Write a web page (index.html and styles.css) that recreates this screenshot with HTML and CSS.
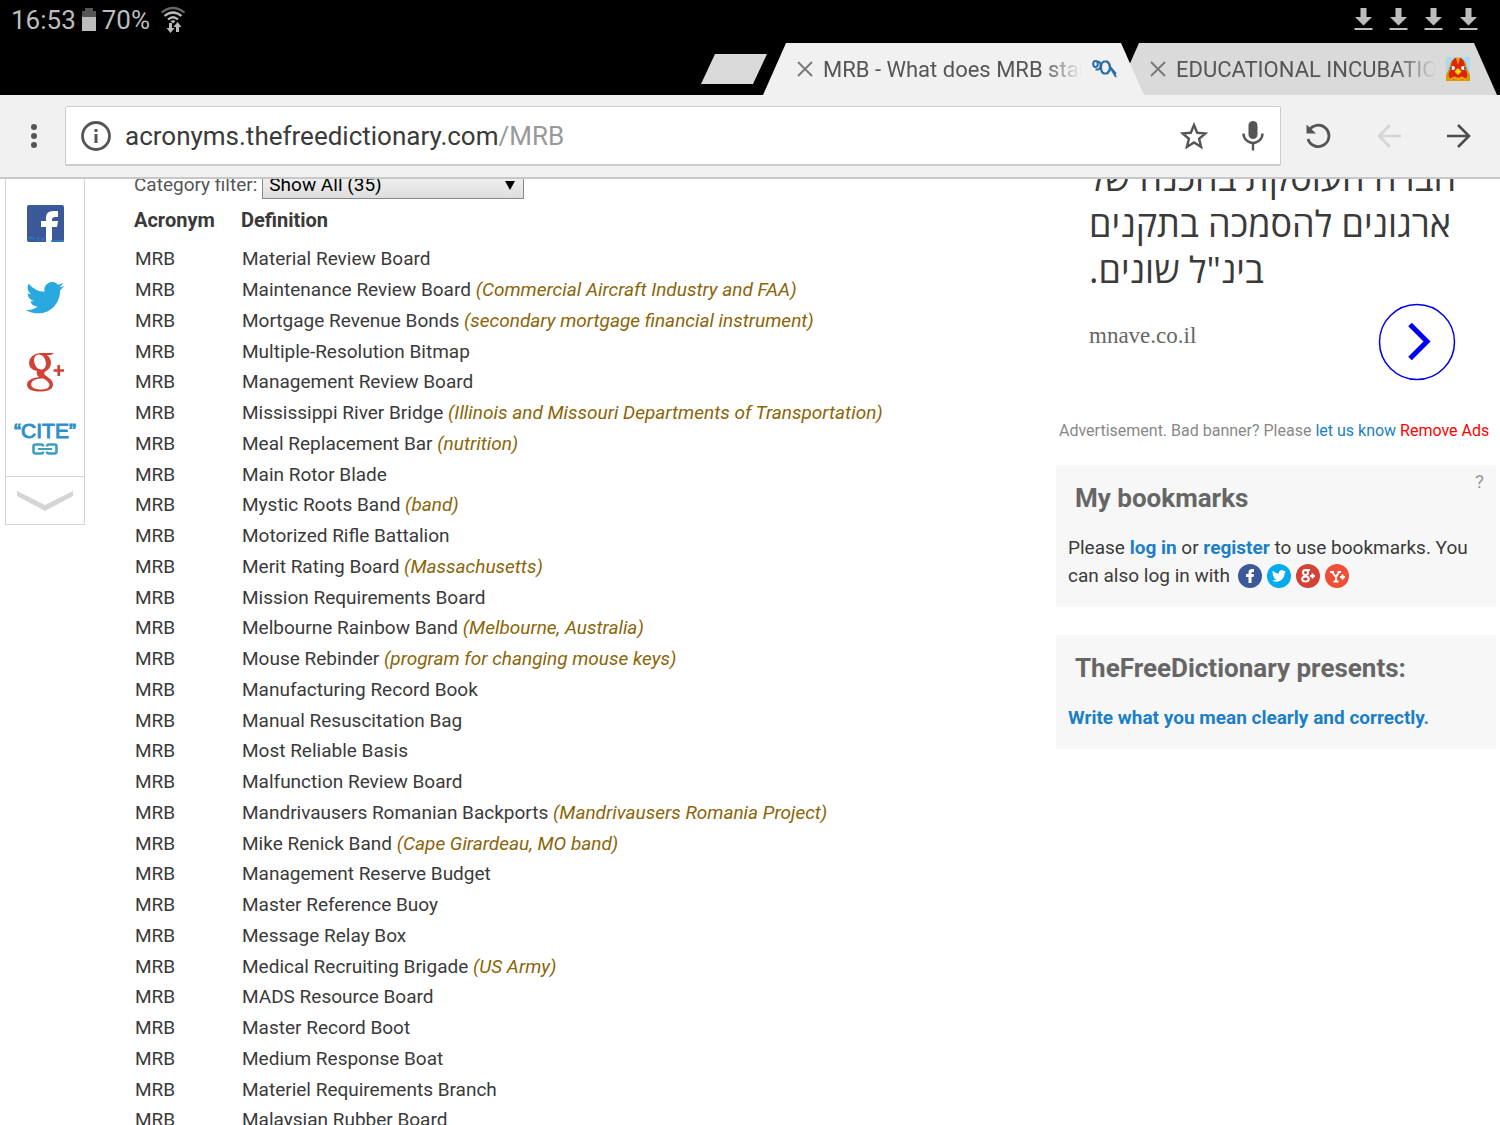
FILE: index.html
```html
<!DOCTYPE html>
<html lang="en">

<head>
    <meta charset="UTF-8">
    <meta name="viewport" content="width=device-width, initial-scale=1.0">
    <title>MRB - What does MRB stand for?</title>
    <link rel="stylesheet" href="styles.css">
</head>

<body>
    <!-- shapes used more than once -->
    <svg class="defs" aria-hidden="true">
        <symbol id="download" viewBox="0 0 20 24">
            <path d="M6.500 0h6v9H18L9.500 17.500 1 9h5.500z M.5 20h18v2H.5z" fill="#bdbdbd" />
        </symbol>
        <symbol id="close" viewBox="0 0 16 16">
            <path d="M1 1l14 14M15 1L1 15" stroke="#777" stroke-width="1.800" fill="none" />
        </symbol>
        <symbol id="bird" viewBox="0 0 24 20">
            <path d="M24 2.400a10 10 0 0 1-2.800.8A5 5 0 0 0 23.300.4a10 10 0 0 1-3.100 1.200 4.900 4.900 0 0 0-8.400 4.500A14 14 0 0 1 1.700 1a4.900 4.900 0 0 0 1.500 6.600A5 5 0 0 1 1 7v.1a4.900 4.900 0 0 0 4 4.800 5 5 0 0 1-2.200.1 4.900 4.900 0 0 0 4.600 3.400A10 10 0 0 1 0 17.500a14 14 0 0 0 7.500 2.200c9.100 0 14-7.500 14-14v-.6A10 10 0 0 0 24 2.400z" />
        </symbol>
    </svg>

    <div class="status-bar">
        <div class="status-left">
            <span>16:53</span>
            <svg width="16" height="24" viewBox="0 0 16 24">
                <path d="M4 0h8v3h3v6H1V3h3z" fill="#555" />
                <path d="M1 9h14v14H1z" fill="#bdbdbd" />
            </svg>
            <span>70%</span>
            <svg class="wifi" width="26" height="28" viewBox="0 0 26 28" fill="none" stroke="#bdbdbd" stroke-width="2.200">
                <path d="M1.500 6.500q11.500-9 23 0" stroke="#666" />
                <path d="M4.500 10q8.500-7 17 0M8 13.500q5-4.500 10 0" />
                <path d="M10.500 15q2.500-1.500 5 0L13 17.500z" fill="#bdbdbd" stroke="none" />
                <path d="M9 17h3v5h2.500L10.500 27l-4-5H9zM16 26h3v-5h2.500l-4-5-4 5H16z" fill="#bdbdbd" stroke="none" />
            </svg>
        </div>
        <div class="status-right">
            <svg width="20" height="24"><use href="#download" /></svg>
            <svg width="20" height="24"><use href="#download" /></svg>
            <svg width="20" height="24"><use href="#download" /></svg>
            <svg width="20" height="24"><use href="#download" /></svg>
        </div>
    </div>

    <div class="tab-strip">
        <button class="new-tab" aria-label="New tab"></button>
        <div class="tab active">
            <button class="tab-close" aria-label="Close tab"><svg width="16" height="16"><use href="#close" /></svg></button>
            <span class="tab-title">MRB - What does MRB stand for?</span>
            <svg width="25" height="18" viewBox="0 0 25 18" fill="none" stroke="#2a6da3" stroke-width="2">
                <ellipse cx="3.500" cy="4" rx="2.300" ry="3" />
                <path d="M5.500 1.500Q9 2 8.500 6q0 4-5 3.500" />
                <path d="M12 1.500q-3 1-3 6t3 6h3q3-2 3-6t-3-6z" stroke-width="2.200" />
                <path d="M17 5l7 12M18 7l6 7" />
            </svg>
        </div>
        <div class="tab">
            <button class="tab-close" aria-label="Close tab"><svg width="16" height="16"><use href="#close" /></svg></button>
            <span class="tab-title">EDUCATIONAL INCUBATION</span>
            <svg width="24" height="24" viewBox="0 0 24 24">
                <path d="M0 0h24v24H0z" fill="#a9d9f5" />
                <path d="M0 24v-6q3-5 4-11 2-6 8-6.500Q18 1 20 7q1 6 4 11v6z" fill="#d99a00" />
                <path d="M3 20q-1-4 2-9 0-7 4-10h6q4 3 4 10 3 5 2 9l-4 3-5-3-5 3z" fill="#dd2410" />
                <path d="M10 1l2 7 2-7z" fill="#f0a400" />
                <path d="M12 11l3.500 3.500L12 18l-3.500-3.500z" fill="#ffd800" />
                <path d="M4 24q0-4 5-4.500l3 2 3-2q5 .5 5 4.500l-4-2-4 1-4-1z" fill="#f0a400" />
                <circle cx="7" cy="11" r="2" fill="#fff" />
                <circle cx="17" cy="11" r="2" fill="#fff" />
                <path d="M4 11h2M18 11h2" stroke="#668" stroke-width="2" />
            </svg>
        </div>
    </div>

    <div class="toolbar">
        <button class="icon-button menu" aria-label="Menu">
            <svg width="8" height="24" viewBox="0 0 8 24" fill="#555">
                <circle cx="4" cy="3" r="3" />
                <circle cx="4" cy="12" r="3" />
                <circle cx="4" cy="21" r="3" />
            </svg>
        </button>
        <div class="url-box">
            <svg width="30" height="30" viewBox="0 0 30 30">
                <circle cx="15" cy="15" r="13.500" fill="none" stroke="#555" stroke-width="2.800" />
                <path d="M13.500 8h3v3h-3zM13.500 13h3v9h-3z" fill="#555" />
            </svg>
            <div class="url">acronyms.thefreedictionary.com<span>/MRB</span></div>
            <button class="icon-button" aria-label="Bookmark">
                <svg width="28" height="28" viewBox="0 0 28 28">
                    <path d="M14 3l3.200 7.800 8.300.6-6.400 5.400 2 8.200-7.100-4.500L6.900 25l2-8.200-6.400-5.400 8.300-.6z" fill="none" stroke="#555" stroke-width="2.400" />
                </svg>
            </button>
            <button class="icon-button" aria-label="Voice search">
                <svg width="22" height="30" viewBox="0 0 22 30">
                    <rect x="6.500" y="0" width="9" height="18" rx="4.500" fill="#555" />
                    <path d="M1.500 12.500a9.500 9.500 0 0 0 19 0M11 22v7.500" fill="none" stroke="#555" stroke-width="2.400" />
                </svg>
            </button>
        </div>
        <button class="icon-button" aria-label="Reload">
            <svg width="26" height="26" viewBox="0 0 26 26">
                <path d="M4 7.500A10.700 10.700 0 1 1 3 16" fill="none" stroke="#555" stroke-width="2.800" />
                <path d="M1.500 1.500L11 10.500H1.500z" fill="#555" />
            </svg>
        </button>
        <button class="icon-button" aria-label="Back" disabled>
            <svg width="24" height="24" viewBox="0 0 24 24" fill="none" stroke="#d4d4d4" stroke-width="2.600">
                <path d="M24 12H2M13 1L2 12l11 11" />
            </svg>
        </button>
        <button class="icon-button" aria-label="Forward">
            <svg width="24" height="24" viewBox="0 0 24 24" fill="none" stroke="#4d4d4d" stroke-width="2.600">
                <path d="M0 12h22M11 1l11 11-11 11" />
            </svg>
        </button>
    </div>

    <div class="page">
        <div class="share">
            <a href="#" class="share-item" aria-label="Facebook">
                <svg width="38" height="38" viewBox="0 0 38 38">
                    <rect x="1" y="0" width="37" height="37" rx="2" fill="#3b5998" />
                    <path d="M20 37V22h-5v-6h5v-3q0-7 7-7h5v6h-3q-3 0-3 3v1h6l-1 6h-5v15z" fill="#fff" />
                    <path d="M2 34q3-3 6 0M12 32v4M17 36v-3M25 36h13" fill="none" stroke="#2b7fc5" stroke-width="1.500" />
                </svg>
            </a>
            <a href="#" class="share-item" aria-label="Twitter">
                <svg width="38" height="32" fill="#2aa9e0"><use href="#bird" /></svg>
            </a>
            <a href="#" class="share-item" aria-label="Google+">
                <svg width="38" height="40" viewBox="0 0 38 40">
                    <path fill="#d34237" fill-rule="evenodd" d="M14 1h14l-3 2h-4q4 3 4 8 0 5-5 8-3 2-1 4l4 3q4 3 4 6.500 0 7-13 7-13 0-13-7 0-6 12-7.500-3-2-2-6Q3 18 3 10.500 4 2 14 1zM13 2.500q-5 0-5 6Q9 17 15 17.500q5 0 5-6Q19 3 13 2.500zM15 26.500q-9 .5-10 5.500 0 5 9.500 5.500 8.500 0 9-4.500 0-3-6-6.500z" />
                    <path d="M27.500 18.500H38M32.700 13v11" fill="none" stroke="#d34237" stroke-width="2.600" />
                </svg>
            </a>
            <a href="#" class="share-item cite">
                <span>“CITE”</span>
                <svg width="26" height="12" viewBox="0 0 26 12" fill="none" stroke="#3b9fc0" stroke-width="2.600">
                    <path d="M11 3.500V3q0-1.500-2-1.500H3.500q-2 0-2 2v5q0 2 2 2H9q2 0 2-1.500v-.5M15 3.500V3q0-1.500 2-1.500h5.500q2 0 2 2v5q0 2-2 2H17q-2 0-2-1.500v-.5" />
                    <path d="M6 6h14" stroke-width="2" />
                </svg>
            </a>
            <button class="share-more" aria-label="More">
                <svg width="58" height="22" viewBox="0 0 58 22">
                    <path d="M1 1l28 14L57 1v5L29 21 1 6z" fill="#d5d5d5" />
                </svg>
            </button>
        </div>

        <div class="main">
            <div class="filter">
                <label for="category">Category filter:</label>
                <div class="select-wrap">
                    <select id="category">
                        <option>Show All (35)</option>
                    </select>
                    <svg class="arrow" width="10" height="10" viewBox="0 0 10 10"><path d="M0 1h10L5 10z" /></svg>
                </div>
            </div>
            <table class="acronyms">
                <thead>
                    <tr><th>Acronym</th><th>Definition</th></tr>
                </thead>
                <tbody>
                    <tr><td>MRB</td><td>Material Review Board</td></tr>
                    <tr><td>MRB</td><td>Maintenance Review Board <i>(Commercial Aircraft Industry and FAA)</i></td></tr>
                    <tr><td>MRB</td><td>Mortgage Revenue Bonds <i>(secondary mortgage financial instrument)</i></td></tr>
                    <tr><td>MRB</td><td>Multiple-Resolution Bitmap</td></tr>
                    <tr><td>MRB</td><td>Management Review Board</td></tr>
                    <tr><td>MRB</td><td>Mississippi River Bridge <i>(Illinois and Missouri Departments of Transportation)</i></td></tr>
                    <tr><td>MRB</td><td>Meal Replacement Bar <i>(nutrition)</i></td></tr>
                    <tr><td>MRB</td><td>Main Rotor Blade</td></tr>
                    <tr><td>MRB</td><td>Mystic Roots Band <i>(band)</i></td></tr>
                    <tr><td>MRB</td><td>Motorized Rifle Battalion</td></tr>
                    <tr><td>MRB</td><td>Merit Rating Board <i>(Massachusetts)</i></td></tr>
                    <tr><td>MRB</td><td>Mission Requirements Board</td></tr>
                    <tr><td>MRB</td><td>Melbourne Rainbow Band <i>(Melbourne, Australia)</i></td></tr>
                    <tr><td>MRB</td><td>Mouse Rebinder <i>(program for changing mouse keys)</i></td></tr>
                    <tr><td>MRB</td><td>Manufacturing Record Book</td></tr>
                    <tr><td>MRB</td><td>Manual Resuscitation Bag</td></tr>
                    <tr><td>MRB</td><td>Most Reliable Basis</td></tr>
                    <tr><td>MRB</td><td>Malfunction Review Board</td></tr>
                    <tr><td>MRB</td><td>Mandrivausers Romanian Backports <i>(Mandrivausers Romania Project)</i></td></tr>
                    <tr><td>MRB</td><td>Mike Renick Band <i>(Cape Girardeau, MO band)</i></td></tr>
                    <tr><td>MRB</td><td>Management Reserve Budget</td></tr>
                    <tr><td>MRB</td><td>Master Reference Buoy</td></tr>
                    <tr><td>MRB</td><td>Message Relay Box</td></tr>
                    <tr><td>MRB</td><td>Medical Recruiting Brigade <i>(US Army)</i></td></tr>
                    <tr><td>MRB</td><td>MADS Resource Board</td></tr>
                    <tr><td>MRB</td><td>Master Record Boot</td></tr>
                    <tr><td>MRB</td><td>Medium Response Boat</td></tr>
                    <tr><td>MRB</td><td>Materiel Requirements Branch</td></tr>
                    <tr><td>MRB</td><td>Malaysian Rubber Board</td></tr>
                </tbody>
            </table>
        </div>

        <div class="sidebar">
            <div class="ad">
                <p class="ad-text" lang="he" dir="rtl">חברה העוסקת בהכנה של<br>ארגונים להסמכה בתקנים<br>בינ"ל שונים.</p>
                <div class="ad-footer">
                    <span>mnave.co.il</span>
                    <a href="#" aria-label="Open ad">
                        <svg width="78" height="78" viewBox="0 0 78 78" fill="none" stroke="#0000f5">
                            <circle cx="39" cy="39" r="37.500" stroke-width="1.500" />
                            <path d="M32 21.500L49 38.500 32 55.500" stroke-width="5" />
                        </svg>
                    </a>
                </div>
            </div>
            <p class="ad-note">Advertisement. Bad banner? Please <a href="#">let us know</a> <a href="#" class="remove">Remove Ads</a></p>

            <div class="box">
                <a href="#" class="help">?</a>
                <h2>My bookmarks</h2>
                <p>Please <a href="#">log in</a> or <a href="#">register</a> to use bookmarks. You can also log in with
                    <span class="logins">
                        <svg width="24" height="24" viewBox="0 0 24 24">
                            <circle cx="12" cy="12" r="12" fill="#3b5998" />
                            <path d="M10.500 19v-6H8v-3h2.500V8.500q0-3.500 3.500-3.500h2v3h-1.500q-1 0-1 1v1H16l-.5 3h-2v6z" fill="#fff" />
                        </svg>
                        <svg width="24" height="24" viewBox="0 0 24 24">
                            <circle cx="12" cy="12" r="12" fill="#00aced" />
                            <use href="#bird" x="5" y="6" width="14" height="12" fill="#fff" />
                        </svg>
                        <svg width="24" height="24" viewBox="0 0 24 24" fill="none" stroke="#fff">
                            <circle cx="12" cy="12" r="12" fill="#d34237" stroke="none" />
                            <ellipse cx="9.500" cy="8.500" rx="2.500" ry="2.500" stroke-width="2" />
                            <ellipse cx="9.500" cy="15" rx="3.300" ry="2.500" stroke-width="2" />
                            <path d="M9 6h5M14 12h5M16.500 9.500v5" stroke-width="2" />
                        </svg>
                        <svg width="24" height="24" viewBox="0 0 24 24" fill="none" stroke="#fff">
                            <circle cx="12" cy="12" r="12" fill="#ee4f36" stroke="none" />
                            <path d="M5 8h4M7 8l4 5 3-5M12.500 8H16M11 12v5M8.500 17.500h5" stroke-width="2" />
                            <path d="M15 13h5M17.500 10.500v5" stroke-width="2" />
                        </svg>
                    </span>
                </p>
            </div>

            <div class="box">
                <h2>TheFreeDictionary presents:</h2>
                <p><a href="#">Write what you mean clearly and correctly.</a></p>
            </div>
        </div>
    </div>
</body>

</html>
```
FILE: styles.css
```css
* {
    box-sizing: border-box;
}

body {
    margin: 0;
    height: 100vh;
    display: flex;
    flex-direction: column;
    overflow: hidden;
    font-family: Roboto, sans-serif;
    font-size: 19px;
    color: #3a3a3a;
    background: #fff;
}

svg {
    display: block;
    flex-shrink: 0;
}

button {
    border: none;
    padding: 0;
    background: none;
    cursor: pointer;
}

a {
    color: #1a7fc7;
    text-decoration: none;
}

.defs {
    position: absolute;
    width: 0;
    height: 0;
}

/* status bar */
.status-bar {
    display: flex;
    justify-content: space-between;
    align-items: center;
    height: 40px;
    padding: 0 21px 0 11px;
    flex-shrink: 0;
    background: #000;
    color: #bdbdbd;
    font-size: 26px;
}

.status-left {
    display: flex;
    align-items: center;
    gap: 5px;
}

.wifi {
    margin-left: 5px;
}

.status-right {
    display: flex;
    gap: 15px;
}

/* tabs */
.tab-strip {
    display: flex;
    justify-content: flex-end;
    align-items: flex-end;
    height: 55px;
    padding-right: 3px;
    flex-shrink: 0;
    background: #000;
}

.new-tab {
    width: 66px;
    height: 30px;
    margin: 0 -4px 11px 0;
    background: #dadada;
    clip-path: polygon(14px 0, 100% 0, calc(100% - 14px) 100%, 0 100%);
}

.tab {
    display: flex;
    align-items: center;
    gap: 10px;
    width: 381px;
    height: 52px;
    padding: 0 27px 0 34px;
    background: #dadada;
    clip-path: polygon(23px 0, calc(100% - 23px) 0, 100% 100%, 0 100%);
}

.tab.active {
    margin-right: -28px;
    z-index: 1;
    background: #f1f1f1;
}

.tab-title {
    flex: 1;
    overflow: hidden;
    white-space: nowrap;
    font-size: 22px;
    line-height: 28px;
    padding-top: 2px;
    color: #555;
    mask-image: linear-gradient(to right, #000 85%, transparent);
}

/* toolbar */
.toolbar {
    display: flex;
    align-items: center;
    gap: 46px;
    height: 84px;
    padding: 0 29px 0 30px;
    flex-shrink: 0;
    z-index: 2;
    background: #f1f1f1;
    border-bottom: 2px solid #c8c8c8;
}

.menu {
    margin-right: -19px;
}

.url-box {
    display: flex;
    align-items: center;
    gap: 34px;
    flex: 1;
    height: 60px;
    margin-right: -22px;
    padding: 0 16px 0 15px;
    background: #fff;
    border: 1px solid #ccc;
    border-bottom-width: 2px;
    border-radius: 2px;
}

.url {
    flex: 1;
    margin-left: -20px;
    font-size: 26px;
}

.url span {
    color: #999;
}

/* page */
.page {
    display: flex;
    align-items: flex-start;
    flex: 1;
    min-height: 0;
    padding: 0 4px 0 5px;
}

.share {
    display: flex;
    flex-direction: column;
    align-items: center;
    width: 80px;
    border: 1px solid #d3d3d3;
    border-top: none;
}

.share-item {
    display: flex;
    flex-direction: column;
    align-items: center;
    justify-content: center;
    height: 74px;
}

.share-item:first-child {
    height: 82px;
    padding-top: 8px;
}

.share-item.cite {
    justify-content: flex-start;
    height: 67px;
    padding-top: 10px;
    color: #2e8fc9;
    font-family: "Liberation Sans", Arial, sans-serif;
    font-size: 21px;
    line-height: 24px;
    -webkit-text-stroke: 1px #2e8fc9;
}

.share-more {
    display: flex;
    justify-content: center;
    align-items: center;
    width: 100%;
    height: 48px;
    border-top: 1px solid #d3d3d3;
}

.main {
    flex: 1;
    margin: -10px 0 0 49px;
}

.filter {
    display: flex;
    align-items: center;
    gap: 5px;
    height: 30px;
    color: #555;
}

.select-wrap {
    position: relative;
}

.select-wrap select {
    width: 262px;
    height: 30px;
    padding: 0 6px;
    appearance: none;
    border: 1px solid #888;
    border-radius: 0;
    background: linear-gradient(#f6f6f6, #dedede);
    color: #000;
    font-family: inherit;
    font-size: 19px;
}

.arrow {
    position: absolute;
    right: 9px;
    top: 11px;
}

.acronyms {
    border-collapse: collapse;
    line-height: 23px;
}

.acronyms th {
    padding: 10px 0 11px;
    text-align: left;
    width: 107px;
    font-size: 20px;
}

.acronyms td {
    padding: 4px 1px;
    white-space: nowrap;
}

.acronyms tr:nth-child(4n) td {
    padding-bottom: 3px;
}

.acronyms i {
    color: #8b6508;
}

.sidebar {
    width: 440px;
}

.ad {
    padding: 0 40px 0 33px;
}

.ad-text {
    margin: -24px 0 0;
    font-family: "Open Sans", "Noto Sans", sans-serif;
    font-size: 36px;
    line-height: 46px;
    text-align: left;
    white-space: nowrap;
}

.ad-footer {
    display: flex;
    justify-content: space-between;
    margin-top: 10px;
    font-family: "Liberation Serif", serif;
    font-size: 23px;
    color: #666;
}

.ad-footer span {
    padding-top: 20px;
}

.ad-note {
    margin: 39px 0 23px;
    padding-left: 3px;
    font-size: 16px;
    line-height: 22px;
    color: #888;
    white-space: nowrap;
}

.remove {
    color: #f00;
}

.box {
    position: relative;
    margin-bottom: 28px;
    padding: 17px 12px;
    background: #f7f7f7;
}

.box h2 {
    margin: 0 0 20px 7px;
    font-size: 26px;
    line-height: 32px;
    color: #666;
}

.box p {
    margin: 0;
    line-height: 28px;
}

.box p a {
    font-weight: bold;
}

.help {
    position: absolute;
    top: 5px;
    right: 12px;
    color: #999;
}

.logins {
    display: inline-flex;
    gap: 5px;
    margin-left: 3px;
    vertical-align: -6px;
}
```
